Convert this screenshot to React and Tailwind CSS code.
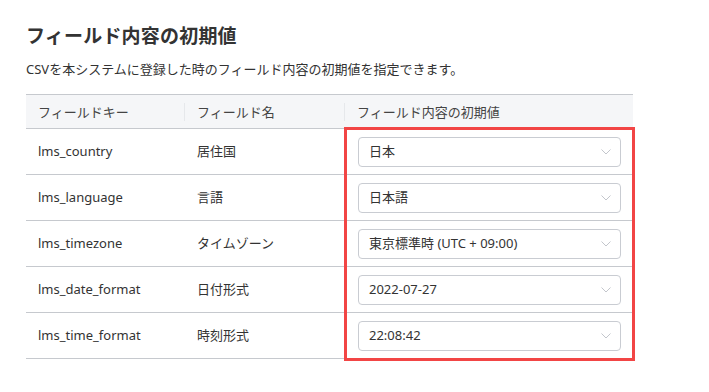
const rows = [
  { key: 'lms_country', name: '居住国', value: '日本' },
  { key: 'lms_language', name: '言語', value: '日本語' },
  { key: 'lms_timezone', name: 'タイムゾーン', value: '東京標準時 (UTC + 09:00)' },
  { key: 'lms_date_format', name: '日付形式', value: '2022-07-27' },
  { key: 'lms_time_format', name: '時刻形式', value: '22:08:42' },
]

function Chevron() {
  return (
    <svg width="10" height="6" viewBox="0 0 10 6" fill="none" className="shrink-0">
      <path d="M0.5 0.5 L5 5 L9.5 0.5" stroke="#c3c6cc" strokeWidth="1" />
    </svg>
  )
}

export default function App() {
  return (
    <div
      className="w-[709px] h-[392px] bg-white text-[#333] pl-[26px] pt-[22px] relative overflow-hidden"
      style={{ fontFamily: '"Noto Sans", "Noto Sans CJK JP", sans-serif' }}
    >
      <h1 className="text-[19px] font-bold leading-[28px] tracking-[0.2px]">フィールド内容の初期値</h1>
      <p className="text-[13px] leading-[20px] mt-[9px]">
        CSVを本システムに登録した時のフィールド内容の初期値を指定できます。
      </p>

      <div className="w-[607px] mt-[15px] border-t border-[#c6c9ce] text-[13px]">
        <div className="grid grid-cols-[159px_160px_288px] h-[34px] bg-[#f5f6f8] border-b border-[#c6c9ce] items-center text-[#444]">
          <div className="pl-3 border-r border-[#e6e8eb] h-[18px] leading-[18px]">フィールドキー</div>
          <div className="pl-3 border-r border-[#e6e8eb] h-[18px] leading-[18px]">フィールド名</div>
          <div className="pl-3 leading-[18px]">フィールド内容の初期値</div>
        </div>
        {rows.map((r) => (
          <div
            key={r.key}
            className="grid grid-cols-[159px_160px_288px] h-[46px] border-b border-[#c6c9ce] items-center"
          >
            <div className="pl-3">{r.key}</div>
            <div className="pl-3">{r.name}</div>
            <div className="pl-[13px] pr-3">
              <div className="h-[30px] rounded-[4px] border border-[#c9ccd2] flex items-center justify-between pl-[10px] pr-[9px]">
                <span>{r.value}</span>
                <Chevron />
              </div>
            </div>
          </div>
        ))}
      </div>

      <div className="absolute left-[344px] top-[127px] w-[291px] h-[234px] border-[3px] border-[#f24545]" />
    </div>
  )
}
